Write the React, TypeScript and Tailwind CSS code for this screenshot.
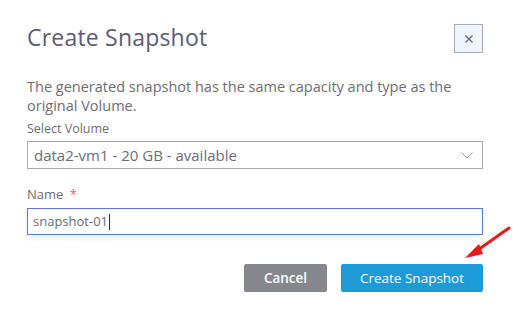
export default function App() {
  return (
    <div className="relative w-[514px] h-[309px] bg-white overflow-hidden" style={{ fontFamily: '"Open Sans", "DejaVu Sans", sans-serif' }}>
      <div className="flex flex-col pl-[27px] pr-[31px] pt-[24px]">
        <div className="flex items-start justify-between">
          <h2 className="-mt-[1px] text-[23px] leading-[28px] tracking-[0.2px] text-[#5e5b75]">Create Snapshot</h2>
          <button className="flex w-[29px] h-[29px] items-center justify-center border border-[#a9abb3] bg-[#eef3fc] text-[#676879]">
            <svg width="10" height="10" viewBox="0 0 10 10" fill="none" stroke="currentColor" strokeWidth="1.4">
              <path d="M1.5 1.5l7 7M8.5 1.5l-7 7" />
            </svg>
          </button>
        </div>

        <p className="mt-[24px] text-[14.5px] leading-[19px] text-[#6d6d76]">
          The generated snapshot has the same capacity and type as the original Volume.
        </p>

        <label className="mt-[5px] text-[12.5px] leading-[17px] text-[#6d6d76]">Select Volume</label>
        <div className="mt-[4px] flex h-[28px] items-center justify-between border border-[#a9abb3] pl-[6px] pr-[9px] text-[15px] text-[#6d6d76]">
          <span>data2-vm1 - 20 GB - available</span>
          <svg width="12" height="7" viewBox="0 0 12 7" fill="none" stroke="#9a9aa6" strokeWidth="1">
            <path d="M0.5 0.5l5.5 5.5 5.5-5.5" />
          </svg>
        </div>

        <label className="mt-[16px] text-[13px] leading-[18px] text-[#6d6d76]">
          Name <span className="ml-[3px] text-[#e35d5d]">*</span>
        </label>
        <div className="mt-[5px] flex h-[27px] items-center border border-[#5b7ad8] pl-[5px] text-[13px] text-[#6d6d76] shadow-[0_3px_6px_rgba(0,0,0,0.08)]">
          <span>snapshot-01</span>
          <span className="ml-[1px] h-[16px] w-[1px] bg-[#333]" />
        </div>

        <div className="mt-[29px] flex justify-end gap-[14px]">
          <button className="h-[28px] w-[83px] rounded-[2px] bg-[#85878c] text-[13.5px] font-semibold text-white">Cancel</button>
          <button className="h-[28px] w-[142px] rounded-[2px] bg-[#1d9bd8] text-[13.5px] text-white">Create Snapshot</button>
        </div>
      </div>

      <svg className="absolute left-[455px] top-[224px]" width="58" height="40" viewBox="0 0 58 40">
        <path d="M54 4L20 28" stroke="#e8181c" strokeWidth="3" strokeLinecap="round" />
        <path d="M10 34L24 20L28 30Z" fill="#e8181c" />
      </svg>
    </div>
  );
}
